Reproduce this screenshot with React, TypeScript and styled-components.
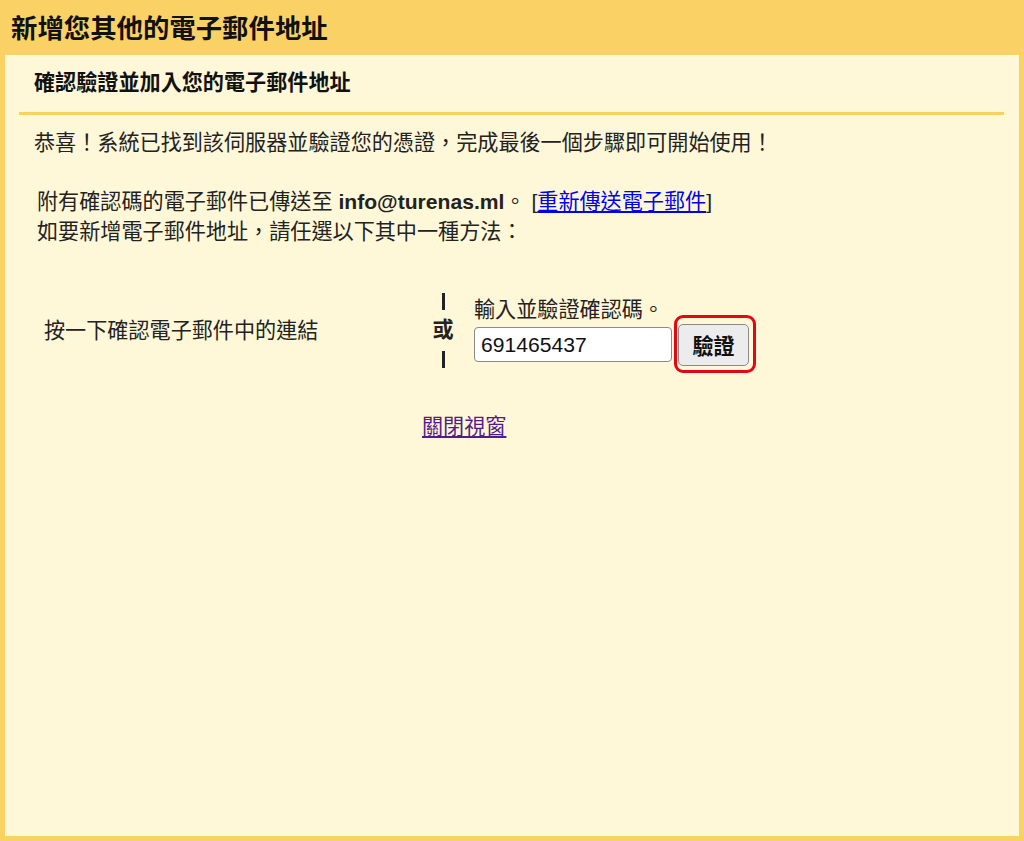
import styled, { createGlobalStyle } from 'styled-components';

const GlobalStyle = createGlobalStyle`
  html, body {
    margin: 0;
    padding: 0;
    background: #fef7d8;
  }
  body {
    font-family: "Liberation Sans", Arial, "Noto Sans CJK TC", sans-serif;
    color: #222;
  }
`;

const Page = styled.div`
  min-height: 100vh;
  display: flex;
  flex-direction: column;
`;

const Header = styled.h1`
  margin: 0;
  height: 52px;
  padding: 3px 0 0 11px;
  background: #fad165;
  font-size: 26.4px;
  font-weight: bold;
  line-height: 52px;
  color: #111;
`;

const Panel = styled.div`
  flex: 1;
  background: #fef7d8;
  border: 5px solid #fad165;
  border-top: 0;
  box-shadow: inset 0 1px 0 #fffbe8;
`;

const SubHeading = styled.h2`
  margin: 0;
  padding: 13px 0 13px 29px;
  font-size: 21.12px;
  font-weight: bold;
  line-height: 30px;
  color: #111;
`;

const Divider = styled.div`
  margin: 0 15px 0 14px;
  height: 3px;
  background: #fbd063;
  border-top: 1px solid #fff6d6;
`;

const Content = styled.div`
  padding: 13px 0 0 29px;
  font-size: 21.12px;
  line-height: 30px;
`;

const Para = styled.p<{ $gap?: number; $indent?: number }>`
  margin: ${(p) => p.$gap ?? 0}px 0 0 0;
  padding-left: ${(p) => p.$indent ?? 0}px;
`;

const Link = styled.a<{ $visited?: boolean }>`
  color: ${(p) => (p.$visited ? '#551a8b' : '#0000ee')};
  text-decoration: underline;
  cursor: pointer;
`;

const Options = styled.div`
  margin-top: 46px;
  display: flex;
  align-items: center;
`;

const LeftOption = styled.div`
  width: 381px;
  padding-left: 10px;
`;

const Separator = styled.div`
  width: 36px;
  display: flex;
  flex-direction: column;
  align-items: center;
  font-weight: bold;
`;

const Bar = styled.div`
  width: 3px;
  height: 17px;
  background: #222;
`;

const Or = styled.div`
  margin: 6px 0 7px;
  line-height: 28px;
`;

const RightOption = styled.div`
  margin-left: 13px;
  display: flex;
  flex-direction: column;
`;

const Label = styled.div`
  line-height: 28px;
`;

const CodeRow = styled.div`
  display: flex;
  align-items: center;
  gap: 6px;
`;

const CodeInput = styled.input`
  box-sizing: border-box;
  width: 198px;
  height: 35px;
  padding: 0 6px;
  border: 1px solid #8a8a8a;
  border-radius: 4px;
  background: #fff;
  font-family: inherit;
  font-size: 21.12px;
  color: #111;
`;

const ButtonWrap = styled.div`
  position: relative;
`;

const VerifyButton = styled.button`
  box-sizing: border-box;
  width: 71px;
  height: 42px;
  border: 1px solid #8a8a8a;
  border-radius: 5px;
  background: #ececec;
  font-family: inherit;
  font-size: 21.12px;
  font-weight: bold;
  color: #111;
  padding: 0;
`;

const Highlight = styled.span`
  position: absolute;
  left: -4px;
  right: -7px;
  top: -9px;
  bottom: -7px;
  border: 3px solid #e30613;
  border-radius: 9px;
  pointer-events: none;
`;

const Footer = styled.div`
  margin-top: 44px;
  padding-left: 388px;
`;

export default function App() {
  return (
    <>
      <GlobalStyle />
      <Page>
        <Header>新增您其他的電子郵件地址</Header>
        <Panel>
          <SubHeading>確認驗證並加入您的電子郵件地址</SubHeading>
          <Divider />
          <Content>
            <Para>恭喜！系統已找到該伺服器並驗證您的憑證，完成最後一個步驟即可開始使用！</Para>
            <Para $gap={29} $indent={3}>
              附有確認碼的電子郵件已傳送至 <b>info@turenas.ml</b>。 [<Link>重新傳送電子郵件</Link>]
              <br />
              如要新增電子郵件地址，請任選以下其中一種方法：
            </Para>
            <Options>
              <LeftOption>按一下確認電子郵件中的連結</LeftOption>
              <Separator>
                <Bar />
                <Or>或</Or>
                <Bar />
              </Separator>
              <RightOption>
                <Label>輸入並驗證確認碼。</Label>
                <CodeRow>
                  <CodeInput defaultValue="691465437" />
                  <ButtonWrap>
                    <VerifyButton>驗證</VerifyButton>
                    <Highlight />
                  </ButtonWrap>
                </CodeRow>
              </RightOption>
            </Options>
            <Footer>
              <Link $visited>關閉視窗</Link>
            </Footer>
          </Content>
        </Panel>
      </Page>
    </>
  );
}
